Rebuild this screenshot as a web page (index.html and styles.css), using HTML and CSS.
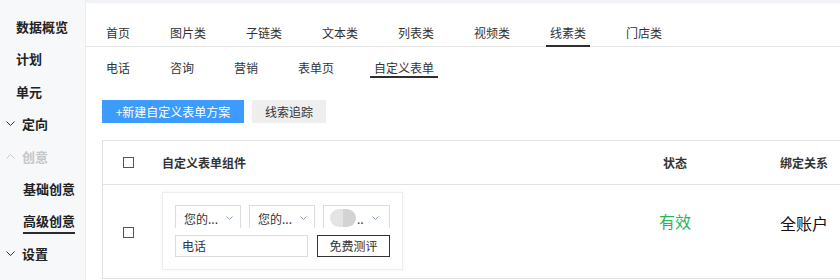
FILE: index.html
```html
<!DOCTYPE html>
<html lang="zh-CN">
<head>
<meta charset="utf-8">
<title>自定义表单</title>
<link rel="stylesheet" href="styles.css">
</head>
<body>
<div class="app">
  <aside class="sidebar">
    <div class="nav-item">数据概览</div>
    <div class="nav-item">计划</div>
    <div class="nav-item">单元</div>
    <div class="nav-item has-arrow"><svg class="arrow" viewBox="0 0 9 5"><path d="M0.5 0.5 L4.5 4.5 L8.5 0.5" fill="none" stroke="#2a2f45" stroke-width="1"/></svg>定向</div>
    <div class="nav-item has-arrow muted"><svg class="arrow" viewBox="0 0 9 5"><path d="M0.5 4.5 L4.5 0.5 L8.5 4.5" fill="none" stroke="#c8c8c8" stroke-width="1"/></svg>创意</div>
    <div class="nav-item sub">基础创意</div>
    <div class="nav-item sub active"><span>高级创意</span></div>
    <div class="nav-item has-arrow"><svg class="arrow" viewBox="0 0 9 5"><path d="M0.5 0.5 L4.5 4.5 L8.5 0.5" fill="none" stroke="#2a2f45" stroke-width="1"/></svg>设置</div>
  </aside>
  <main class="main">
    <div class="topstrip"></div>
    <nav class="tabs">
      <div class="tab">首页</div>
      <div class="tab">图片类</div>
      <div class="tab">子链类</div>
      <div class="tab">文本类</div>
      <div class="tab">列表类</div>
      <div class="tab">视频类</div>
      <div class="tab active">线素类</div>
      <div class="tab">门店类</div>
    </nav>
    <nav class="subtabs">
      <div class="subtab">电话</div>
      <div class="subtab">咨询</div>
      <div class="subtab">营销</div>
      <div class="subtab">表单页</div>
      <div class="subtab active">自定义表单</div>
    </nav>
    <div class="actions">
      <button class="btn btn-primary">+新建自定义表单方案</button>
      <button class="btn btn-grey">线索追踪</button>
    </div>
    <div class="table">
      <div class="row head">
        <div class="cell c-check"><span class="checkbox"></span></div>
        <div class="cell c-comp">自定义表单组件</div>
        <div class="cell c-state">状态</div>
        <div class="cell c-bind">绑定关系</div>
      </div>
      <div class="row body">
        <div class="cell c-check"><span class="checkbox"></span></div>
        <div class="cell c-comp">
          <div class="card">
            <div class="selects">
              <div class="select">您的...<svg class="chev" viewBox="0 0 7 4"><path d="M0.5 0.5 L3.5 3.5 L6.5 0.5" fill="none" stroke="#8fa2c6" stroke-width="1"/></svg></div>
              <div class="select">您的...<svg class="chev" viewBox="0 0 7 4"><path d="M0.5 0.5 L3.5 3.5 L6.5 0.5" fill="none" stroke="#8fa2c6" stroke-width="1"/></svg></div>
              <div class="select wide"><span class="blur"></span>..<svg class="chev" viewBox="0 0 7 4"><path d="M0.5 0.5 L3.5 3.5 L6.5 0.5" fill="none" stroke="#8fa2c6" stroke-width="1"/></svg></div>
            </div>
            <div class="inputs">
              <div class="input">电话</div>
              <div class="test-btn">免费测评</div>
            </div>
          </div>
        </div>
        <div class="cell c-state"><span class="valid">有效</span></div>
        <div class="cell c-bind"><span class="bind">全账户</span></div>
      </div>
    </div>
  </main>
</div>
</body>
</html>
```
FILE: styles.css
```css
* { box-sizing: border-box; }
html, body { margin: 0; padding: 0; }
body {
  width: 840px;
  height: 280px;
  overflow: hidden;
  font-family: "Noto Sans CJK SC", "Noto Sans", sans-serif;
  color: #333;
  background: #fff;
}
.app { display: flex; height: 280px; }

.sidebar {
  width: 86px;
  flex-shrink: 0;
  background: #f7f8fa;
  border-right: 1px solid #ebedf0;
  padding-top: 10px;
}
.nav-item {
  height: 32.5px;
  display: flex;
  align-items: center;
  padding-left: 16px;
  font-size: 13px;
  font-weight: bold;
  color: #222;
  white-space: nowrap;
}
.nav-item.has-arrow { padding-left: 6px; }
.arrow { width: 9px; height: 5px; margin-right: 7px; flex-shrink: 0; }
.nav-item.muted { color: #c6c6c6; }
.nav-item.sub { padding-left: 23px; }
.nav-item.active span {
  line-height: 18px;
  padding-bottom: 2px;
  border-bottom: 2px solid #2b2b2b;
  margin-top: 4px;
}

.main { flex: 1; min-width: 0; overflow: hidden; }
.topstrip { height: 3px; background: #f0f2f5; }

.tabs {
  display: flex;
  align-items: flex-end;
  gap: 32px;
  height: 44px;
  padding-left: 16px;
  border-bottom: 1px solid #e4e4e4;
}
.tab {
  position: relative;
  padding: 0 4px 3px;
  font-size: 12px;
  line-height: 20px;
  white-space: nowrap;
}
.tab.active::after {
  content: "";
  position: absolute;
  left: 0; right: 0; bottom: -1px;
  height: 2px;
  background: #2e2e2e;
}

.subtabs {
  display: flex;
  gap: 32px;
  padding: 11px 0 0 16px;
}
.subtab {
  position: relative;
  padding: 0 4px;
  font-size: 12px;
  line-height: 20px;
  white-space: nowrap;
}
.subtab.active::after {
  content: "";
  position: absolute;
  left: 0; right: 0; bottom: 0;
  height: 2px;
  background: #2e2e2e;
}

.actions {
  display: flex;
  gap: 8px;
  margin: 22px 0 0 16px;
}
.btn {
  height: 23px;
  border: none;
  padding: 0;
  font-family: inherit;
  font-size: 12px;
  line-height: 23px;
  text-align: center;
}
.btn-primary { width: 142px; background: #3d9bfd; color: #fff; }
.btn-grey { width: 74px; background: #eeeeee; color: #333; }

.table {
  margin: 17px 0 0 16px;
  width: 820px;
  border: 1px solid #e2e2e2;
  border-bottom: none;
}
.row {
  display: grid;
  grid-template-columns: 58px 459px 110px 1fr;
  border-bottom: 1px solid #e2e2e2;
}
.row.head { height: 44px; align-items: center; font-size: 12px; font-weight: bold; }
.row.body { height: 94px; }
.c-check { padding-left: 20px; display: flex; align-items: center; }
.checkbox {
  display: block;
  width: 11px;
  height: 11px;
  border: 1px solid #555;
  background: #fff;
}
.c-comp { padding-left: 1px; }
.c-state { text-align: center; }
.c-bind { padding-left: 50px; white-space: nowrap; }
.row.body .c-check { padding-top: 2px; }

.card {
  width: 241px;
  margin-top: 7px;
  padding: 12px;
  border: 1px solid #eeeeee;
  box-shadow: 0 0 4px rgba(0,0,0,0.05);
  background: #fff;
}
.selects { display: flex; gap: 8px; height: 23px; }
.select {
  width: 66px;
  height: 23px;
  border: 1px solid #dcdcdc;
  border-bottom: none;
  display: flex;
  align-items: center;
  padding: 2px 0 0 8px;
  font-size: 12px;
  color: #333;
  white-space: nowrap;
}
.select.wide { width: 67px; padding-left: 6px; }
.chev { width: 7px; height: 4px; margin-left: 8px; flex-shrink: 0; }
.blur {
  display: inline-block;
  width: 26px;
  height: 18px;
  border-radius: 9px;
  background: linear-gradient(90deg, #e4e4e4 50%, #d3d3d3 50%);
  margin-right: 1px;
}
.inputs { display: flex; gap: 9px; margin-top: 7px; }
.input {
  width: 133px;
  height: 22px;
  border: 1px solid #dcdcdc;
  padding-left: 6px;
  font-size: 12px;
  line-height: 20px;
}
.test-btn {
  width: 73px;
  height: 22px;
  border: 1px solid #333;
  font-size: 12px;
  line-height: 20px;
  text-align: center;
}

.valid {
  display: block;
  padding-top: 25px;
  font-size: 16px;
  line-height: 22px;
  color: #2bb553;
}
.bind {
  display: block;
  padding-top: 27px;
  font-size: 16px;
  line-height: 22px;
  color: #111;
}
```
